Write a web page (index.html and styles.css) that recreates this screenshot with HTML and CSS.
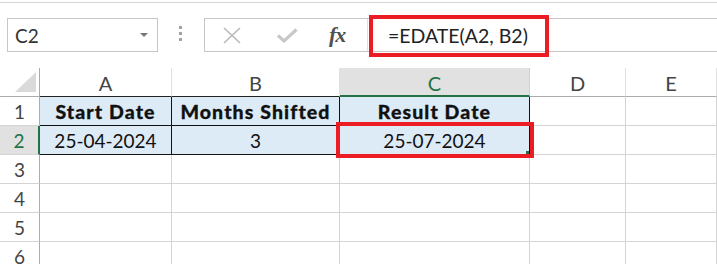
FILE: index.html
```html
<!DOCTYPE html>
<html lang="en">
<head>
  <meta charset="UTF-8">
  <title>EDATE</title>
  <link rel="stylesheet" href="styles.css">
</head>
<body>

  <div class="toolbar">
    <div class="namebox">
      <span>C2</span>
      <span class="caret"></span>
    </div>
    <div class="grip"><i></i><i></i><i></i></div>
    <div class="fbar">
      <div class="ficons">
        <svg class="ico-x" width="18" height="17" viewBox="0 0 18 17">
          <path d="M1 1 L17 16 M17 1 L1 16" stroke="#b9b9b9" stroke-width="1.6" fill="none"/>
        </svg>
        <svg class="ico-ok" width="21" height="15" viewBox="0 0 21 15">
          <path d="M1 7.5 L7 13 L19.5 1.5" stroke="#c8c8c8" stroke-width="3.2" fill="none"/>
        </svg>
        <span class="fx">fx</span>
      </div>
      <div class="finput">
        <span class="formula">=EDATE(A2, B2)</span>
        <span class="mark"></span>
      </div>
    </div>
  </div>

  <div class="sheet">
    <div class="corner"><span class="tri"></span></div>
    <div class="ch">A</div>
    <div class="ch">B</div>
    <div class="ch sel">C</div>
    <div class="ch plain">D</div>
    <div class="ch plain">E</div>

    <div class="rh">1</div>
    <div class="t head">Start Date</div>
    <div class="t head">Months Shifted</div>
    <div class="t head">Result Date</div>
    <div class="c"></div>
    <div class="c"></div>

    <div class="rh sel">2</div>
    <div class="t">25-04-2024</div>
    <div class="t">3</div>
    <div class="t active">25-07-2024<span class="mark"></span><span class="handle"></span></div>
    <div class="c"></div>
    <div class="c"></div>

    <div class="rh">3</div>
    <div class="c"></div><div class="c"></div><div class="c"></div><div class="c"></div><div class="c"></div>
    <div class="rh">4</div>
    <div class="c"></div><div class="c"></div><div class="c"></div><div class="c"></div><div class="c"></div>
    <div class="rh">5</div>
    <div class="c"></div><div class="c"></div><div class="c"></div><div class="c"></div><div class="c"></div>
    <div class="rh">6</div>
    <div class="c"></div><div class="c"></div><div class="c"></div><div class="c"></div><div class="c"></div>
  </div>

</body>
</html>
```

FILE: styles.css
```css
body {
  margin: 0;
  height: 264px;
  overflow: hidden;
  background: #ffffff;
  font-family: Lato, "Open Sans", sans-serif;
  color: #222;
}
.toolbar {
  margin-top: 2px;
  height: 66px;
  box-sizing: border-box;
  border-top: 1px solid #d5d5d5;
  padding: 15px 0 0 7px;
  display: flex;
  align-items: flex-start;
}
.namebox {
  width: 151px;
  height: 34px;
  box-sizing: border-box;
  border: 1px solid #c6c6c6;
  display: flex;
  align-items: center;
  justify-content: space-between;
  padding: 0 9px 0 7px;
  font-size: 19px;
  color: #333;
}
.caret {
  width: 0;
  height: 0;
  border-left: 4px solid transparent;
  border-right: 4px solid transparent;
  border-top: 4px solid #777;
}
.grip {
  margin-left: 21px;
  width: 3px;
  padding-top: 8px;
  display: flex;
  flex-direction: column;
  gap: 3px;
}
.grip i {
  display: block;
  width: 3px;
  height: 3px;
  background: #a3a3a3;
}
.fbar {
  margin-left: 22px;
  flex: 1;
  height: 34px;
  box-sizing: border-box;
  border: 1px solid #c6c6c6;
  border-right: none;
  display: flex;
}
.ficons {
  width: 162px;
  border-right: 1px solid #e0e0e0;
  display: flex;
  align-items: center;
}
.ico-x {
  margin-left: 18px;
}
.ico-ok {
  margin-left: 36px;
}
.fx {
  margin-left: 31px;
  font-family: "Liberation Serif", serif;
  font-style: italic;
  font-weight: bold;
  font-size: 22px;
  color: #505050;
  letter-spacing: -1px;
}
.finput {
  position: relative;
  flex: 1;
  display: flex;
  align-items: center;
  padding-left: 20px;
  font-size: 19.5px;
  color: #222;
}
.mark {
  position: absolute;
  box-sizing: border-box;
  border: 4px solid #ec1c24;
}
.finput .mark {
  left: 1px;
  top: -4px;
  width: 180px;
  height: 42px;
}

.sheet {
  display: grid;
  grid-template-columns: 40px 132px 168px 190px 96px 1fr;
  grid-auto-rows: 29px;
  font-size: 19px;
}
.sheet > div {
  box-sizing: border-box;
  display: flex;
  align-items: center;
  justify-content: center;
}
.corner {
  border-right: 1px solid #ababab;
  border-bottom: 1px solid #ababab;
  position: relative;
}
.tri {
  position: absolute;
  left: 15px;
  top: 4px;
  width: 0;
  height: 0;
  border-left: 21px solid transparent;
  border-bottom: 20px solid #dadada;
}
.ch {
  color: #444;
  font-size: 20px;
  border-right: 1px solid #e1e1e1;
  border-bottom: 1px solid #222;
  padding-top: 2px;
}
.ch.plain {
  border-bottom-color: #ababab;
}
.ch.sel {
  background: #e1e1e1;
  color: #217346;
  border-bottom: 2px solid #217346;
  border-right-color: #d0d0d0;
}
.rh {
  color: #444;
  border-right: 1px solid #ababab;
  border-bottom: 1px solid #d4d4d4;
}
.rh.sel {
  background: #e1e1e1;
  color: #217346;
  border-right: 2px solid #217346;
}
.c {
  border-right: 1px solid #d4d4d4;
  border-bottom: 1px solid #d4d4d4;
}
.t {
  background: #ddebf7;
  border-right: 1px solid #111;
  border-bottom: 1px solid #111;
  color: #111;
}
.t.head {
  font-weight: 900;
  font-size: 19.5px;
  letter-spacing: 1.1px;
  -webkit-text-stroke: 0.3px #111;
}
.t.active {
  position: relative;
}
.t.active .mark {
  left: -4px;
  top: -4px;
  width: 198px;
  height: 36px;
}
.handle {
  position: absolute;
  right: 0;
  bottom: 0;
  width: 3px;
  height: 3px;
  background: #217346;
}
```
